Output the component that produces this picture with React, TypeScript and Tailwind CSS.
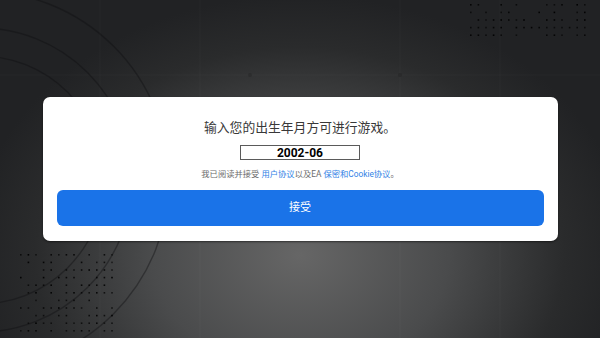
import { useMemo } from "react";

// deterministic pseudo-random so the dot fields look scattered but stable
const rand = (seed: number) => {
  const x = Math.sin(seed * 12.9898) * 43758.5453;
  return x - Math.floor(x);
};

type Dot = { x: number; y: number; o: number };

const makeDots = (x0: number, y0: number, cols: number, rows: number, step: number, seed: number): Dot[] => {
  const dots: Dot[] = [];
  for (let r = 0; r < rows; r++) {
    for (let c = 0; c < cols; c++) {
      const v = rand(seed + r * 31 + c * 7);
      if (v < 0.35) continue;
      dots.push({ x: x0 + c * step, y: y0 + r * step, o: 0.35 + v * 0.6 });
    }
  }
  return dots;
};

const Backdrop = () => {
  const leftDots = useMemo(() => makeDots(20, 254, 13, 11, 7.6, 3), []);
  const topDots = useMemo(() => makeDots(470, 4, 16, 5, 7.6, 11), []);
  return (
    <svg className="absolute inset-0 h-full w-full" viewBox="0 0 600 338" aria-hidden>
      <g stroke="#ffffff" strokeOpacity="0.025" strokeWidth="1">
        <line x1="100" y1="0" x2="100" y2="338" />
        <line x1="200" y1="0" x2="200" y2="338" />
        <line x1="400" y1="0" x2="400" y2="338" />
        <line x1="500" y1="0" x2="500" y2="338" />
        <line x1="0" y1="75" x2="600" y2="75" />
      </g>
      <circle cx="250" cy="75" r="2" fill="#000" fillOpacity="0.15" />
      <circle cx="400" cy="75" r="2" fill="#000" fillOpacity="0.15" />
      <g fill="none" stroke="#0f1011" strokeOpacity="0.4" strokeWidth="1.4">
        <circle cx="-20" cy="180" r="124" />
        <circle cx="-20" cy="180" r="152" />
        <circle cx="-20" cy="180" r="189" />
      </g>
      <g fill="#000">
        {leftDots.map((d, i) => (
          <rect key={`l${i}`} x={d.x} y={d.y} width="1.6" height="1.6" fillOpacity={d.o} />
        ))}
        {topDots.map((d, i) => (
          <rect key={`t${i}`} x={d.x} y={d.y} width="1.6" height="1.6" fillOpacity={d.o} />
        ))}
      </g>
    </svg>
  );
};

export default function App() {
  return (
    <div
      className="relative flex h-[338px] w-full items-center justify-center overflow-hidden bg-[radial-gradient(ellipse_330px_260px_at_300px_255px,#666666_0%,#4a4b4c_45%,#2a2b2c_80%,#212224_100%)]"
      style={{ fontFamily: "Roboto, 'Noto Sans CJK SC', sans-serif" }}
    >
      <Backdrop />
      <div className="relative flex h-[144px] w-[515px] flex-col items-center rounded-[7px] bg-white pt-[22px] shadow-[0_1px_2px_rgba(0,0,0,0.5)]">
        <h1 className="h-[18px] text-[12.8px] leading-[18px] text-[#383838]">
          输入您的出生年月方可进行游戏。
        </h1>
        <div className="mt-[8px] flex h-[15px] w-[120px] items-center justify-center border-[1.5px] border-[#5a5a5a] text-[12px] font-bold leading-none text-black">
          2002-06
        </div>
        <p className="mt-[7px] h-[14px] text-[8.3px] leading-[14px] text-[#6b6b6b]">
          我已阅读并接受 <span className="text-[#2f7fe6]">用户协议</span>以及EA{" "}
          <span className="text-[#2f7fe6]">保密和Cookie协议</span>。
        </p>
        <button
          type="button"
          className="mt-[9px] flex h-[36px] w-[487px] items-center justify-center rounded-[6px] bg-[#1a73e8] text-[11px] text-white"
        >
          接受
        </button>
      </div>
    </div>
  );
}
